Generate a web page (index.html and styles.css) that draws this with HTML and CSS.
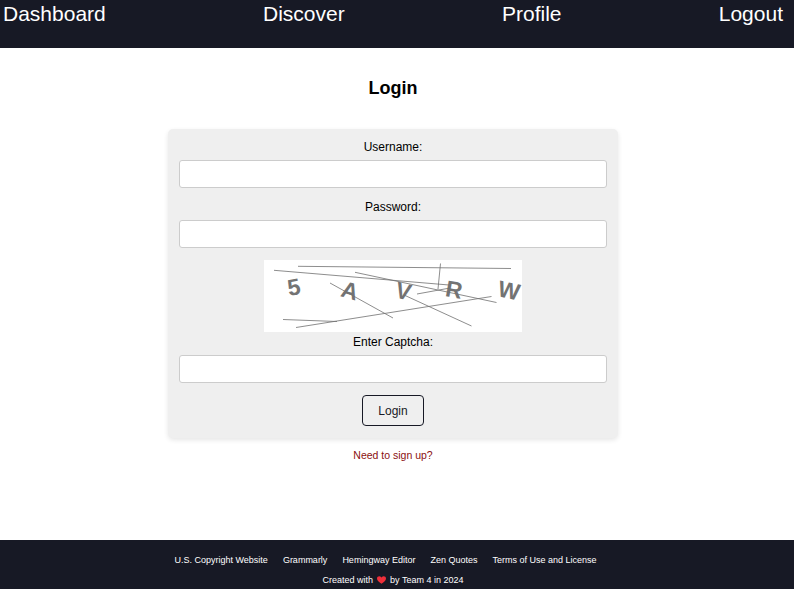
FILE: index.html
```html
<!DOCTYPE html>
<html lang="en">
<head>
<meta charset="utf-8">
<title>Login</title>
<link rel="stylesheet" href="styles.css">
</head>
<body>
<nav class="nav">
  <a href="#">Dashboard</a>
  <a href="#">Discover</a>
  <a href="#">Profile</a>
  <a href="#">Logout</a>
</nav>
<main class="main">
  <h1 class="title">Login</h1>
  <form class="card">
    <label for="username">Username:</label>
    <input id="username" type="text">
    <label for="password">Password:</label>
    <input id="password" type="password">
    <svg class="captcha" width="258" height="72" viewBox="0 0 258 72">
      <rect width="258" height="72" fill="#fff"/>
      <g class="letters">
        <text transform="translate(30 27) rotate(-10)" y="8">5</text>
        <text transform="translate(86 30.500) rotate(16)" y="8">A</text>
        <text transform="translate(139.500 31) rotate(14)" y="8">V</text>
        <text transform="translate(190 29.500) rotate(10)" y="8">R</text>
        <text transform="translate(245 30.500) rotate(12)" y="8">W</text>
      </g>
      <path class="strokes" d="M34 6.300L247 8.500M10 10.300L185 25M91 12.300L232.500 42.500M66 23L129 58M19 59.500L73 61.500M32 67.500L227.500 36.500M140 35L207.500 66M176.500 3.500L174 29M153 34L186 28"/>
    </svg>
    <label for="answer">Enter Captcha:</label>
    <input id="answer" type="text">
    <button type="button">Login</button>
  </form>
  <a class="signup" href="#">Need to sign up?</a>
</main>
<footer class="footer">
  <div class="links">
    <a href="#">U.S. Copyright Website</a>
    <a href="#">Grammarly</a>
    <a href="#">Hemingway Editor</a>
    <a href="#">Zen Quotes</a>
    <a href="#">Terms of Use and License</a>
  </div>
  <p class="credit"><span>Created with</span>
    <svg width="9" height="8" viewBox="0 0 9 8"><path fill="#ee2f3a" d="M4.500 7.800C2 6 0 4.500 0 2.400C0 .2 3 -.5 4.500 1.500C6 -.5 9 .2 9 2.400C9 4.500 7 6 4.500 7.800Z"/></svg>
    <span>by Team 4 in 2024</span></p>
</footer>
</body>
</html>
```
FILE: styles.css
```css
* { box-sizing: border-box; }
body {
  margin: 0;
  height: 589px;
  display: flex;
  flex-direction: column;
  font-family: "Liberation Sans", Arial, sans-serif;
  font-size: 12px;
  color: #000;
  background: #fff;
}
a { color: inherit; text-decoration: none; }
.nav {
  height: 48px;
  padding: 2px 11px 0 3px;
  display: flex;
  justify-content: space-between;
  background: #171925;
  color: #fff;
  font-size: 21px;
  line-height: 24px;
}
.main {
  flex: 1;
  width: 786px;
  display: flex;
  flex-direction: column;
  align-items: center;
}
.title {
  margin: 30px 0;
  font-size: 18px;
  line-height: 21px;
}
.card {
  width: 450px;
  height: 309px;
  padding: 11px 11px 0;
  display: flex;
  flex-direction: column;
  align-items: center;
  background: #efefef;
  border-radius: 5px;
  box-shadow: 0 2px 5px rgba(0, 0, 0, .1);
}
label { line-height: 14px; }
input {
  width: 100%;
  height: 28px;
  margin: 6px 0 12px;
  padding: 0 6px;
  border: 1px solid #ccc;
  border-radius: 3px;
  background: #fff;
}
.captcha { flex: none; margin-bottom: 3px; }
.letters {
  fill: #737373;
  font-size: 23px;
  font-weight: bold;
  text-anchor: middle;
}
.strokes { fill: none; stroke: #707070; stroke-width: .8; }
button {
  width: 62px;
  height: 31px;
  padding: 0;
  border: 1px solid #171925;
  border-radius: 4px;
  background: #efefef;
  color: #171925;
  font: inherit;
}
.signup {
  margin-top: 11px;
  color: #8b1010;
  font-size: 10.5px;
  line-height: 13px;
}
.footer {
  height: 49px;
  padding: 14px 8px 0 0;
  background: #171925;
  color: #fff;
  font-size: 9px;
  line-height: 12px;
}
.links, .credit { display: flex; justify-content: center; }
.links { gap: 15px; padding-right: 15px; }
.credit { margin: 8px 0 0; gap: 4px; align-items: center; }
```
